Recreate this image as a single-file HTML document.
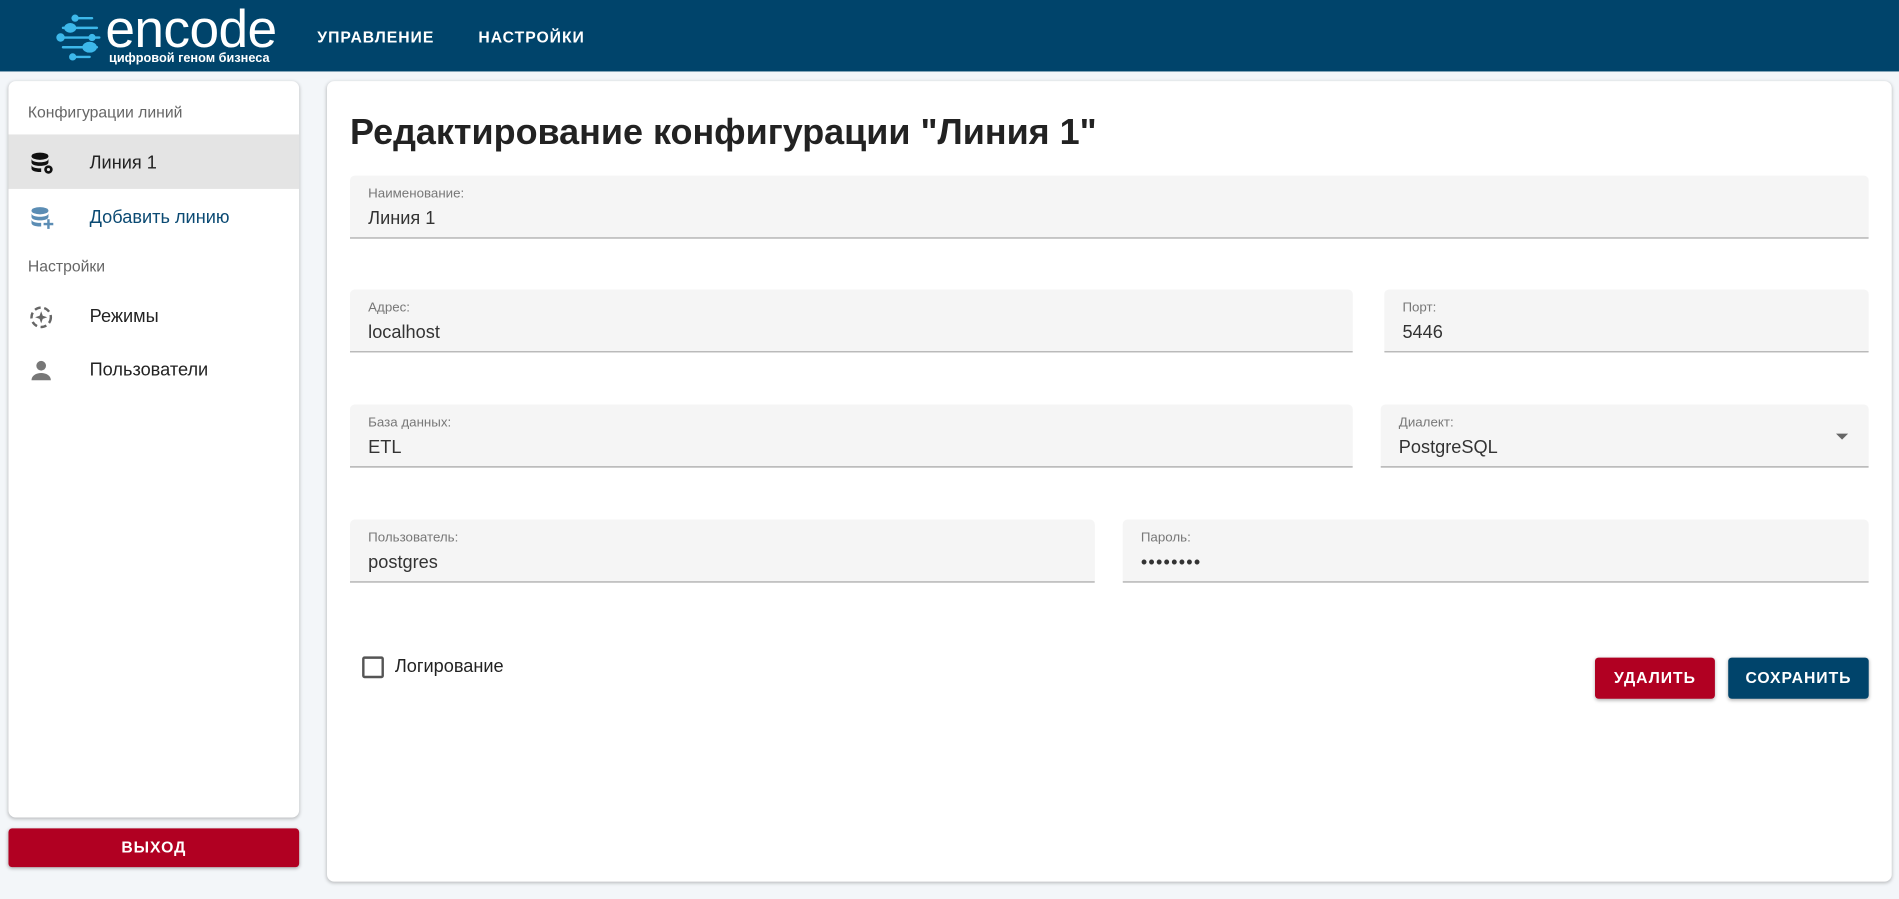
<!DOCTYPE html>
<html><head><meta charset="utf-8"><style>
html,body{margin:0;padding:0;width:1899px;height:899px;overflow:hidden;background:#f3f6f9;}
#s{position:absolute;left:0;top:0;width:1568px;height:742px;transform:scale(1.21109);transform-origin:0 0;font-family:"Liberation Sans","DejaVu Sans",sans-serif;}
.a{position:absolute;}
.hdr{left:0;top:0;width:1568px;height:59px;background:#00446b;}
.nav{color:#fff;font-weight:bold;font-size:13px;letter-spacing:0.8px;top:23px;}
.card{background:#fff;border-radius:6px;box-shadow:0 1px 3px rgba(0,0,0,0.25);}
.sec{font-size:13px;color:#666;left:16px;}
.item{font-size:15px;color:#222;left:67px;}
.f{background:#f5f5f5;border-bottom:1px solid #999;border-radius:4px 4px 0 0;box-sizing:border-box;}
.f .l{position:absolute;left:15px;top:9px;font-size:11px;color:#777;}
.f .v{position:absolute;left:15px;top:27px;font-size:15px;color:#333;}
.btn{color:#fff;font-weight:bold;font-size:13px;letter-spacing:0.8px;text-align:center;border-radius:3px;box-shadow:0 1px 3px rgba(0,0,0,0.3);}
</style></head><body><div id="s">
<div class="a hdr"></div>
<svg class="a" style="left:46px;top:12px" width="40" height="40" viewBox="0 0 40 40">
<g stroke="#3db8ea" stroke-width="2" fill="#3db8ea" stroke-linecap="round">
<line x1="14" y1="3" x2="30" y2="3"/><circle cx="16" cy="3" r="2"/>
<line x1="6" y1="11" x2="34" y2="11"/><ellipse cx="12" cy="11" rx="4" ry="3"/>
<line x1="2" y1="19" x2="36" y2="19"/><circle cx="4" cy="19" r="2.5"/><circle cx="30" cy="19" r="2"/>
<line x1="6" y1="27" x2="34" y2="27"/><ellipse cx="28" cy="27" rx="5" ry="3.5"/>
<line x1="14" y1="35" x2="28" y2="35"/><circle cx="14" cy="35" r="2"/>
</g></svg>
<div class="a" style="left:87px;top:3px;color:#fff;font-size:44px;letter-spacing:-0.5px;line-height:44px;">encode</div>
<div class="a" style="left:90px;top:42px;color:#fff;font-size:10.5px;font-weight:bold;">цифровой геном бизнеса</div>
<div class="a nav" style="left:262px">УПРАВЛЕНИЕ</div>
<div class="a nav" style="left:395px">НАСТРОЙКИ</div>

<div class="a card" style="left:7px;top:67px;width:240px;height:608px;">
<div class="a sec" style="top:18px">Конфигурации линий</div>
<div class="a" style="left:0;top:44px;width:240px;height:45px;background:#e4e4e4"></div>
<svg class="a" style="left:18px;top:58px" width="20" height="20" viewBox="0 0 20 20"><g fill="#111"><ellipse cx="8" cy="4" rx="7" ry="3"/><path d="M1 6c0 2 3 3 7 3s7-1 7-3v3c0 2-3 3-7 3s-7-1-7-3z"/><path d="M1 11c0 2 3 3 7 3h1v3H8c-4 0-7-1-7-3z"/><circle cx="15" cy="15" r="3.5"/></g><circle cx="15" cy="15" r="1.3" fill="#e4e4e4"/></svg>
<div class="a item" style="top:59px">Линия 1</div>
<svg class="a" style="left:18px;top:103px" width="20" height="20" viewBox="0 0 20 20"><g fill="#5b8db4"><ellipse cx="8" cy="4" rx="7" ry="3"/><path d="M1 6c0 2 3 3 7 3s7-1 7-3v3c0 2-3 3-7 3s-7-1-7-3z"/><path d="M1 11c0 2 3 3 7 3h1v3H8c-4 0-7-1-7-3z"/><rect x="11" y="14" width="8" height="2"/><rect x="14" y="11" width="2" height="8"/></g></svg>
<div class="a item" style="top:104px;color:#0b4a73">Добавить линию</div>
<div class="a sec" style="top:145px">Настройки</div>
<svg class="a" style="left:17px;top:185px" width="20" height="20" viewBox="0 0 20 20"><circle cx="10" cy="10" r="8" fill="none" stroke="#666" stroke-width="2" stroke-dasharray="5 3"/><path d="M10 5l1.3 3.7L15 10l-3.7 1.3L10 15l-1.3-3.7L5 10l3.7-1.3z" fill="#666"/></svg>
<div class="a item" style="top:186px">Режимы</div>
<svg class="a" style="left:17px;top:229px" width="20" height="20" viewBox="0 0 20 20"><circle cx="10" cy="6" r="4" fill="#777"/><path d="M2 18c0-4 4-6 8-6s8 2 8 6z" fill="#777"/></svg>
<div class="a item" style="top:230px">Пользователи</div>
</div>
<div class="a btn" style="left:7px;top:684px;width:240px;height:32px;line-height:32px;background:#b10022;">ВЫХОД</div>

<div class="a card" style="left:270px;top:67px;width:1292px;height:661px;"></div>
<div class="a" style="left:289px;top:93px;font-size:29.7px;font-weight:bold;color:#222;">Редактирование конфигурации "Линия 1"</div>

<div class="a f" style="left:289px;top:145px;width:1254px;height:52px"><span class="l">Наименование:</span><span class="v">Линия 1</span></div>
<div class="a f" style="left:289px;top:239px;width:828px;height:52px"><span class="l">Адрес:</span><span class="v">localhost</span></div>
<div class="a f" style="left:1143px;top:239px;width:400px;height:52px"><span class="l">Порт:</span><span class="v">5446</span></div>
<div class="a f" style="left:289px;top:334px;width:828px;height:52px"><span class="l">База данных:</span><span class="v">ETL</span></div>
<div class="a f" style="left:1140px;top:334px;width:403px;height:52px"><span class="l">Диалект:</span><span class="v">PostgreSQL</span>
<div class="a" style="left:376px;top:24px;width:0;height:0;border-left:5px solid transparent;border-right:5px solid transparent;border-top:5px solid #666"></div></div>
<div class="a f" style="left:289px;top:429px;width:615px;height:52px"><span class="l">Пользователь:</span><span class="v">postgres</span></div>
<div class="a f" style="left:927px;top:429px;width:616px;height:52px"><span class="l">Пароль:</span><span class="v" style="letter-spacing:1px">••••••••</span></div>

<div class="a" style="left:299px;top:542px;width:14px;height:14px;border:2px solid #555;border-radius:2px"></div>
<div class="a" style="left:326px;top:542px;font-size:15px;color:#222">Логирование</div>
<div class="a btn" style="left:1317px;top:543px;width:99px;height:34px;line-height:34px;background:#b10022;">УДАЛИТЬ</div>
<div class="a btn" style="left:1427px;top:543px;width:116px;height:34px;line-height:34px;background:#00446b;">СОХРАНИТЬ</div>
</div></body></html>
